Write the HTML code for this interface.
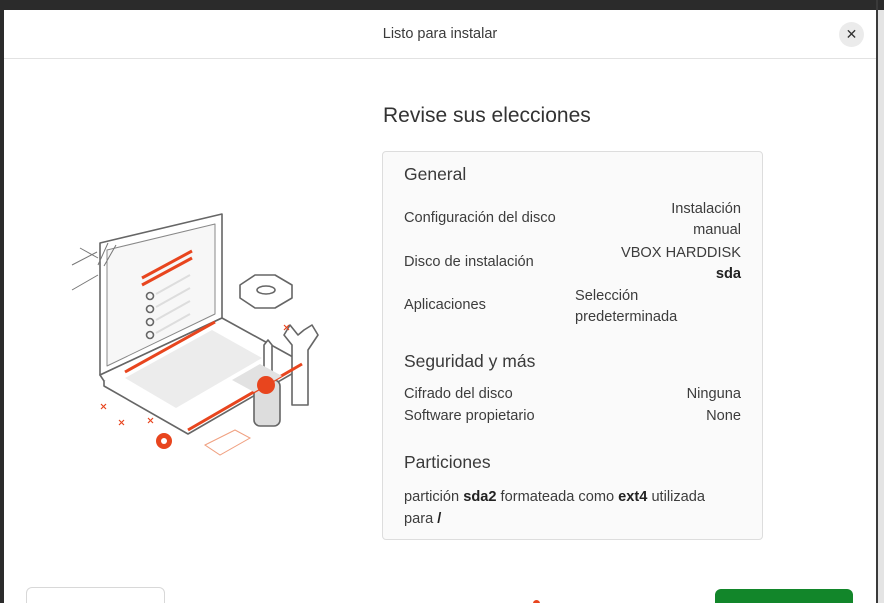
<!DOCTYPE html>
<html><head><meta charset="utf-8"><style>
*{margin:0;padding:0;box-sizing:border-box}
html,body{width:884px;height:603px;overflow:hidden}
body{background:#e9e9e9;font-family:"Liberation Sans","DejaVu Sans",sans-serif;color:#333;position:relative}
.top{position:absolute;left:0;top:0;width:884px;height:10px;background:#2b2b2b}
.lstrip{position:absolute;left:0;top:0;width:4px;height:603px;background:#2b2b2b}
.rline{position:absolute;left:876px;top:0;width:2px;height:603px;background:#3a3a3a}
.rbg{position:absolute;left:878px;top:10px;width:6px;height:593px;background:#e4e4e4}
.dlg{position:absolute;left:4px;top:10px;width:872px;height:593px;background:#fff;overflow:hidden}
.hdr{position:absolute;left:0;top:0;width:872px;height:49px;border-bottom:1px solid #e2e2e2;text-align:center;line-height:48px;font-size:14.5px;color:#3a3a3a}
.close{position:absolute;left:835px;top:12px;width:25px;height:25px;border-radius:50%;background:#ebebeb;font-size:14px;line-height:25px;text-align:center;color:#333}
h1{position:absolute;left:379px;top:94px;font-size:21px;font-weight:normal;color:#333}
.card{position:absolute;left:378px;top:141px;width:381px;height:389px;background:#fafafa;border:1px solid #ddd;border-radius:4px;font-size:14.6px;color:#3c3c3c}
.t{position:absolute;white-space:nowrap}
.sec{font-size:17.5px;color:#3a3a3a}
.r{text-align:right;right:21px}
b{color:#222}
.btn1{position:absolute;left:22px;top:577px;width:139px;height:30px;border:1px solid #d8d8d8;border-radius:6px;background:#fff}
.btn2{position:absolute;left:711px;top:579px;width:138px;height:30px;border-radius:6px;background:#12862a}
.dot{position:absolute;left:529px;top:590px;width:7px;height:7px;border-radius:50%;background:#e8451e}
</style></head><body>
<div class="top"></div><div class="lstrip"></div><div class="rline"></div><div class="rbg"></div>
<div class="dlg">
<div class="hdr">Listo para instalar</div>
<div class="close">✕</div>
<svg style="position:absolute;left:56px;top:195px" width="290" height="265" viewBox="60 205 290 265">
<g fill="none" stroke="#666" stroke-width="1.6" stroke-linejoin="round">
<path d="M100 243 L100 375 L222 318 L222 214 Z" fill="#fff"/>
<path d="M107 250 L107 366 L215 314 L215 224 Z" fill="#f7f7f7" stroke="#888" stroke-width="1"/>
<path d="M100 375 L104 381 L188 428 L302 362 L222 318 Z" fill="#fff"/>
<path d="M104 381 L104 386 L188 434 L302 368 L302 362" fill="#fff"/>
<path d="M72 265 L97 252 M80 248 L98 258 M108 243 L98 265 M116 245 L104 266 M72 290 L98 275" stroke="#777" stroke-width="1"/>
<circle cx="150" cy="296" r="3.5"/><circle cx="150" cy="309" r="3.5"/><circle cx="150" cy="322" r="3.5"/><circle cx="150" cy="335" r="3.5"/>
<path d="M156 294 L190 275 M156 307 L190 288 M156 320 L190 301 M156 333 L190 314" stroke="#ddd" stroke-width="2"/>
<path d="M240 285 L255 275 L275 275 L292 285 L292 298 L275 308 L255 308 L240 298 Z" fill="#fff"/>
<ellipse cx="266" cy="290" rx="9" ry="4"/>
<rect x="254" y="380" width="26" height="46" rx="6" fill="#ddd"/>
<path d="M264 380 L264 345 L268 340 L272 345 L272 380" fill="#fff"/>
<path d="M292 405 L292 345 L284 335 L290 325 L298 335 L304 330 L312 325 L318 335 L308 350 L308 405 Z" fill="#fff"/>
</g>
<g stroke="#e8451e" stroke-width="3" fill="none">
<path d="M142 278 L192 251 M142 285 L192 258"/>
<path d="M125 372 L215 322"/>
<path d="M188 430 L302 364"/>
</g>
<g><path d="M125 378 L212 330 L262 358 L176 408 Z" fill="#ececec"/><path d="M232 380 L260 364 L282 376 L254 392 Z" fill="#e2e2e2"/></g>
<circle cx="266" cy="385" r="9" fill="#e8451e"/>
<circle cx="164" cy="441" r="8" fill="#e8451e"/><circle cx="164" cy="441" r="3" fill="#fff"/>
<path d="M205 445 L235 430 L250 438 L220 455 Z" fill="none" stroke="#f0a080" stroke-width="1"/>
<g stroke="#e8451e" stroke-width="1.2"><path d="M101 404 l5 5 m0 -5 l-5 5 M119 420 l5 5 m0 -5 l-5 5 M148 418 l5 5 m0 -5 l-5 5 M284 325 l5 5 m0 -5 l-5 5"/></g>
</svg>
<h1>Revise sus elecciones</h1>
<div class="card">
<div class="t sec" style="left:21px;top:12px">General</div>
<div class="t" style="left:21px;top:58px">Configuración del disco</div>
<div class="t r" style="top:47px;line-height:21px">Instalación<br>manual</div>
<div class="t" style="left:21px;top:102px">Disco de instalación</div>
<div class="t r" style="top:91px;line-height:21px">VBOX HARDDISK<br><b>sda</b></div>
<div class="t" style="left:21px;top:145px">Aplicaciones</div>
<div class="t" style="left:192px;top:134px;line-height:21px">Selección<br>predeterminada</div>
<div class="t sec" style="left:21px;top:199px">Seguridad y más</div>
<div class="t" style="left:21px;top:234px">Cifrado del disco</div>
<div class="t r" style="top:234px">Ninguna</div>
<div class="t" style="left:21px;top:256px">Software propietario</div>
<div class="t r" style="top:256px">None</div>
<div class="t sec" style="left:21px;top:300px">Particiones</div>
<div class="t" style="left:21px;top:334px;line-height:22px">partición <b>sda2</b> formateada como <b>ext4</b> utilizada<br>para <b>/</b></div>
</div>
<div class="btn1"></div>
<div class="dot"></div>
<div class="btn2"></div>
</div>
</body></html>
